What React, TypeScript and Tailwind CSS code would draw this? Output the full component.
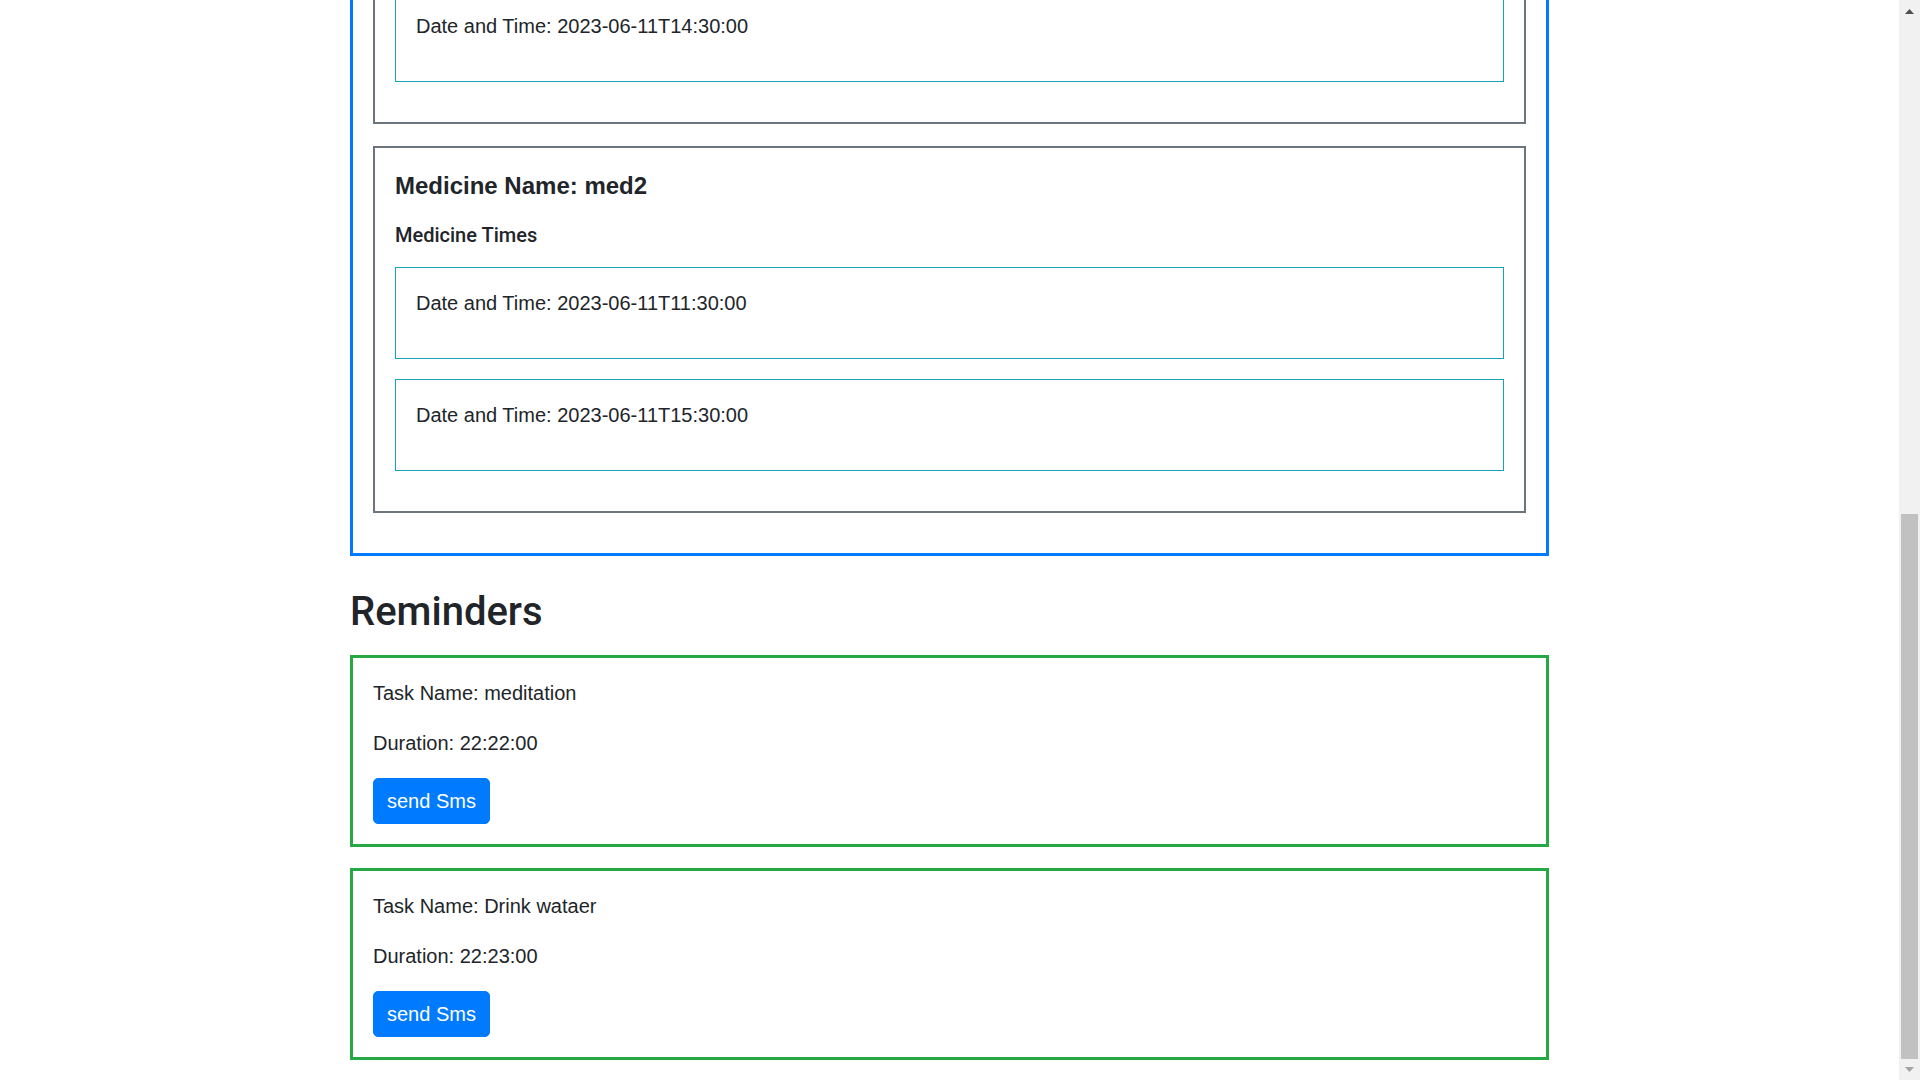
type Medicine = { name: string; times: string[] };
type Reminder = { task: string; duration: string };

const medicines: Medicine[] = [
  { name: 'med1', times: ['2023-06-11T14:30:00'] },
  { name: 'med2', times: ['2023-06-11T11:30:00', '2023-06-11T15:30:00'] },
];

const reminders: Reminder[] = [
  { task: 'meditation', duration: '22:22:00' },
  { task: 'Drink wataer', duration: '22:23:00' },
];

function MedicineCard({ med }: { med: Medicine }) {
  return (
    <div className="border-2 border-[#6c757d] p-[20px] shrink-0">
      <h5 className="text-[24px] font-bold leading-[36px] mb-[16px]">Medicine Name: {med.name}</h5>
      <h6 className="text-[20px] font-medium font-['Roboto',sans-serif] leading-[30px] mb-[17px]">Medicine Times</h6>
      {med.times.map((t) => (
        <div key={t} className="border border-[#17a2b8] p-[20px] mb-[20px]">
          <p className="leading-[30px] mb-[20px]">Date and Time: {t}</p>
        </div>
      ))}
    </div>
  );
}

function ReminderCard({ r }: { r: Reminder }) {
  return (
    <div className="border-[3px] border-[#28a745] p-[20px] shrink-0">
      <p className="leading-[30px] mb-[20px]">Task Name: {r.task}</p>
      <p className="leading-[30px] mb-[20px]">Duration: {r.duration}</p>
      <button
        type="button"
        className="bg-[#007bff] border border-[#007bff] text-white rounded-[5px] px-[13px] py-[7px] leading-[30px] text-[20px]"
      >
        send Sms
      </button>
    </div>
  );
}

function Scrollbar() {
  return (
    <div className="w-[21px] h-screen bg-[#f1f1f1] flex flex-col shrink-0">
      <div className="h-[21px] shrink-0">
        <svg width="21" height="21" viewBox="0 0 21 21">
          <polygon points="6,14 10.5,9 15,14" fill="#505050" />
        </svg>
      </div>
      <div className="flex-1 flex flex-col justify-end">
        <div className="h-[545px] mx-[2px] bg-[#c1c1c1]" />
      </div>
      <div className="h-[21px] shrink-0">
        <svg width="21" height="21" viewBox="0 0 21 21">
          <polygon points="6,8 10.5,13 15,8" fill="#a3a3a3" />
        </svg>
      </div>
    </div>
  );
}

export default function App() {
  return (
    <div className="flex w-full h-screen overflow-hidden bg-white text-[#212529] text-[20px] font-['Liberation_Sans',Arial,sans-serif]">
      <div className="flex-1 h-screen overflow-hidden flex flex-col justify-end">
        <div className="w-[1199px] mx-auto shrink-0 pb-[20px] flex flex-col">
          <h2 className="text-[40px] font-medium font-['Roboto',sans-serif] leading-[48px] mb-[20px] shrink-0">Medicines</h2>
          <div className="border-[3px] border-[#007bff] px-[20px] pt-[20px] pb-[40px] flex flex-col gap-[22px] shrink-0 mb-[32px]">
            {medicines.map((m) => (
              <MedicineCard key={m.name} med={m} />
            ))}
          </div>
          <h2 className="text-[40px] font-medium font-['Roboto',sans-serif] leading-[48px] mb-[19px] shrink-0">Reminders</h2>
          <div className="flex flex-col gap-[21px]">
            {reminders.map((r) => (
              <ReminderCard key={r.task} r={r} />
            ))}
          </div>
        </div>
      </div>
      <Scrollbar />
    </div>
  );
}
